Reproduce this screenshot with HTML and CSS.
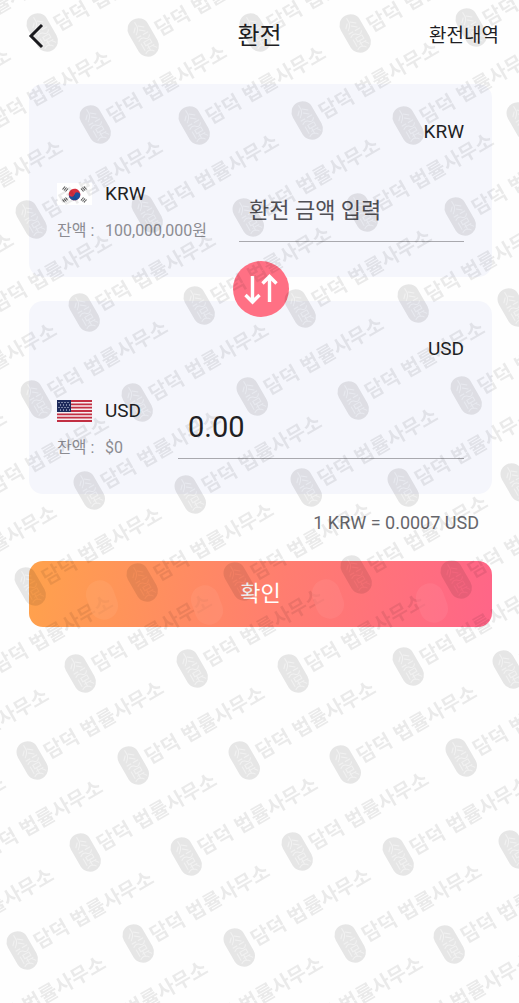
FILE: index.html
```html
<!DOCTYPE html>
<html lang="ko">
<head>
    <meta charset="UTF-8">
    <meta name="viewport" content="width=device-width, initial-scale=1.0">
    <title>환전</title>
    <link rel="stylesheet" href="styles.css">
</head>
<body>
<header class="header">
    <button class="back-btn" type="button" aria-label="뒤로">
        <svg width="16" height="26" viewBox="0 0 16 26" fill="none" stroke="#1c1c20" stroke-width="3">
            <path d="M14 2 L3 13 L14 24"/>
        </svg>
    </button>
    <h1>환전</h1>
    <a class="history-link" href="#">환전내역</a>
</header>

<form class="exchange">
    <div class="cards">
        <section class="card">
            <label class="card-unit" for="from-amount">KRW</label>
            <div class="card-row">
                <div class="wallet">
                    <svg class="flag" viewBox="0 0 35 22">
                        <rect width="35" height="22" fill="#fff"/>
                        <g transform="rotate(14 17.5 11.5)">
                            <circle cx="17.5" cy="11.5" r="5.8" fill="#d8303f"/>
                            <path d="M11.7 11.5 a2.9 2.9 0 0 0 5.8 0 a2.9 2.9 0 0 1 5.800 0 a5.800 5.800 0 0 1 -11.600 0z" fill="#1b4f9c"/>
                        </g>
                        <g stroke="#555" stroke-width="1.1">
                            <path d="M5.500 6.500l2.500-3M7 7.500l2.500-3M8.500 8.500l2.500-3"/>
                            <path d="M24 5.500l2.500 3M25.500 4.500l2.500 3M27 3.500l2.500 3" stroke-dasharray="1.700 .5"/>
                            <path d="M5.500 16.500l2.500 3M7 15.500l2.500 3M8.500 14.500l2.500 3" stroke-dasharray="3 .5"/>
                            <path d="M24 17.500l2.500-3M25.500 18.500l2.500-3M27 19.500l2.500-3" stroke-dasharray="1.700 .5"/>
                        </g>
                    </svg>
                    <span class="wallet-name">KRW</span>
                    <span class="balance">잔액 :</span>
                    <span class="balance">100,000,000원</span>
                </div>
                <input class="amount" id="from-amount" type="text" inputmode="decimal" placeholder="환전 금액 입력">
            </div>
        </section>

        <section class="card">
            <label class="card-unit" for="to-amount">USD</label>
            <div class="card-row">
                <div class="wallet">
                    <svg class="flag" viewBox="0 0 35 22">
                        <rect width="35" height="22" fill="#f6eef0"/>
                        <path d="M0 1h35M0 4.300h35M0 7.600h35M0 11h35M0 14.300h35M0 17.600h35M0 21h35" stroke="#c22f43" stroke-width="1.8"/>
                        <rect width="14" height="12" fill="#1d2a5c"/>
                        <path d="M1.500 2.500h12M3 5h10M1.500 7.500h12M3 10h10" stroke="#dfe6f5" stroke-width="1" stroke-dasharray="1 2"/>
                    </svg>
                    <span class="wallet-name">USD</span>
                    <span class="balance">잔액 :</span>
                    <span class="balance">$0</span>
                </div>
                <input class="amount result" id="to-amount" type="text" value="0.00" readonly>
            </div>
        </section>

        <button class="swap-btn" type="button" aria-label="통화 바꾸기">
            <svg width="56" height="56" viewBox="0 0 56 56" fill="none" stroke="#fff" stroke-width="3.4">
                <path d="M19.500 15V41M12.500 34l7 7L26.500 34"/>
                <path d="M36.500 41V15M29.500 22.500l7-7L43.500 22.500"/>
            </svg>
        </button>
    </div>

    <p class="rate">1 KRW = 0.0007 USD</p>
    <button class="submit-btn" type="submit">확인</button>
</form>

<svg class="watermark" aria-hidden="true">
    <defs>
        <mask id="seal-mask" maskUnits="userSpaceOnUse" x="-12" y="-22" width="24" height="44">
            <rect x="-12" y="-22" width="24" height="44" fill="#fff"/>
            <g fill="none" stroke="#000" stroke-opacity=".45" stroke-width="1">
                <path d="M0 -17v5M-6 -8l4-4M1 -12l5 4M-5 -5q5-4 5-7M0 -8l5 4M-6 -2h5M1 -2h6"/>
                <path d="M-6 2q4-3 7 0t6-1M-5 5v8M-2 5h7v4h-7zM-2 12h8M0 9v7M4 12l3 4M-6 16q5-4 9 2"/>
            </g>
        </mask>
        <g id="mark" transform="rotate(-30)">
            <rect x="-11" y="-20" width="22" height="41" rx="11" mask="url(#seal-mask)"/>
            <text x="15" y="8">담덕 법률사무소</text>
        </g>
    </defs>
    <g id="marks"></g>
    <!-- 버튼 위의 옅은 도장 -->
    <g fill="#fff" fill-opacity=".6">
        <rect x="-14" y="-20" width="28" height="40" rx="14" transform="translate(102 600) rotate(-20)"/>
        <rect x="-14" y="-20" width="28" height="40" rx="14" transform="translate(207 605) rotate(-20)"/>
        <rect x="-14" y="-20" width="28" height="40" rx="14" transform="translate(328 599) rotate(-20)"/>
        <rect x="-14" y="-20" width="28" height="40" rx="14" transform="translate(432 603) rotate(-20)"/>
    </g>
</svg>

<script>
    // 워터마크 위치 (도장 중심 좌표)
    const marks = [
        [-73, 46], [42, 32], [143, 37], [255, 32], [355, 33], [471, 27],
        [-121, 127], [-21, 129], [95, 124], [194, 125], [307, 120], [408, 125], [522, 121],
        [-69, 219], [31, 219], [147, 213], [248, 217], [362, 212], [460, 216],
        [-118, 312], [-20, 313], [84, 312], [199, 305], [300, 308], [413, 303], [513, 307],
        [-75, 402], [36, 399], [137, 402], [252, 396], [353, 400], [466, 395],
        [-125, 490], [-23, 495], [89, 490], [190, 494], [306, 487], [403, 487], [516, 482],
        [-75, 584], [30, 586], [142, 582], [239, 581], [356, 574], [456, 579],
        [-133, 670], [-19, 674], [80, 673], [192, 668], [293, 673], [408, 666], [508, 669],
        [-83, 767], [32, 760], [133, 765], [244, 760], [345, 764], [461, 757],
        [-126, 855], [-29, 859], [85, 852], [186, 856], [297, 851], [398, 856], [514, 849],
        [-78, 947], [22, 950], [138, 943], [239, 947], [350, 943], [449, 944],
        [-26, 1035], [76, 1040], [191, 1035], [291, 1035], [402, 1032]
    ];
    const layer = document.getElementById('marks');

    marks.forEach(function (pos) {
        const use = document.createElementNS('http://www.w3.org/2000/svg', 'use');
        use.setAttribute('href', '#mark');
        use.setAttribute('x', pos[0]);
        use.setAttribute('y', pos[1]);
        layer.appendChild(use);
    });
</script>
</body>
</html>
```

FILE: styles.css
```css
* {
    box-sizing: border-box;
}

body {
    position: relative;
    margin: 0;
    min-height: 100vh;
    background-color: #fefefe;
    color: #1f1f24;
    font-family: Roboto, "Noto Sans CJK KR", sans-serif;
    font-size: 19px;
    line-height: 24px;
}

button,
input {
    font-family: inherit;
    border: none;
    margin: 0;
    padding: 0;
}

button {
    cursor: pointer;
}

.header {
    display: grid;
    grid-template-columns: 1fr auto 1fr;
    align-items: center;
    height: 72px;
    padding: 0 20px;
}

.header h1 {
    margin: 0;
    font-size: 24px;
    font-weight: 400;
}

.back-btn {
    justify-self: start;
    display: flex;
    padding: 4px 8px;
    background: none;
}

.history-link {
    justify-self: end;
    color: inherit;
    text-decoration: none;
}

.exchange {
    padding: 12px 27px 40px 29px;
}

.cards {
    position: relative;
    display: flex;
    flex-direction: column;
    gap: 24px;
}

.card {
    padding: 36px 28px 34px;
    border-radius: 14px;
    background-color: #f5f6fc;
}

.card-unit {
    display: block;
    margin-bottom: 38px;
    text-align: right;
}

.card-row {
    display: flex;
    align-items: flex-end;
    gap: 32px;
}

.wallet {
    display: grid;
    grid-template-columns: 38px auto;
    gap: 13px 10px;
    align-items: center;
    justify-content: start;
    min-width: 89px;
    white-space: nowrap;
}

.flag {
    width: 35px;
    height: 22px;
}

.balance {
    color: #8c8c92;
    font-size: 16px;
}

.amount {
    flex: 1;
    min-width: 0;
    height: 48px;
    margin-bottom: 1px;
    padding: 0 10px 14px;
    border-bottom: 1px solid #a9a9ae;
    border-radius: 0;
    background: none;
    color: #1f1f24;
    font-size: 22px;
    outline: none;
}

.amount::placeholder {
    color: #505056;
    opacity: 1;
}

.result {
    padding-bottom: 16px;
    font-size: 29px;
}

.swap-btn {
    position: absolute;
    top: 50%;
    left: 50%;
    width: 56px;
    height: 56px;
    border-radius: 50%;
    background-color: #ff7084;
    transform: translate(-50%, -50%);
}

.swap-btn svg {
    display: block;
}

.rate {
    margin: 17px 13px 26px;
    color: #66666b;
    font-size: 18px;
    text-align: right;
}

.submit-btn {
    width: 100%;
    height: 66px;
    padding-bottom: 6px;
    border-radius: 14px;
    background: linear-gradient(100deg, #ffa24c, #ff7d70 55%, #ff6588);
    color: #fff;
    font-size: 22px;
}

/* 화면 전체를 덮는 워터마크 */
.watermark {
    position: absolute;
    top: 0;
    left: 0;
    width: 100%;
    height: 100%;
    overflow: hidden;
    pointer-events: none;
    fill: #000;
    opacity: 0.09;
    font-family: "Noto Sans CJK KR", sans-serif;
    font-size: 20px;
    font-weight: 700;
}

.watermark text {
    fill-opacity: 0.85;
}
```
